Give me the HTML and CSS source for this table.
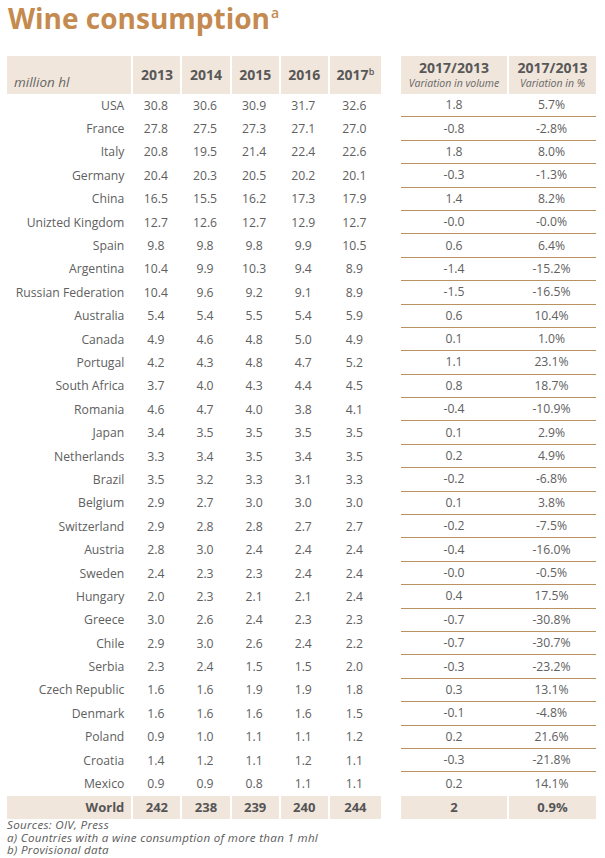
FILE: index.html
```html
<!DOCTYPE html>
<html>
<head>
<meta charset="utf-8">
<link rel="stylesheet" href="styles.css">
</head>
<body>
<h1 class="title">Wine consumption<sup class="title-sup">a</sup></h1>
<div class="tables">
  <table class="tbl left">
    <thead>
      <tr class="head">
        <th class="unit">million hl</th>
        <th>2013</th><th>2014</th><th>2015</th><th>2016</th><th class="last">2017<sup class="hsup">b</sup></th>
      </tr>
    </thead>
    <tbody id="left-body"></tbody>
    <tfoot>
      <tr class="world">
        <td class="country">World</td><td>242</td><td>238</td><td>239</td><td>240</td><td>244</td>
      </tr>
    </tfoot>
  </table>
  <table class="tbl right">
    <thead>
      <tr class="head">
        <th class="var1"><span class="vh">2017/2013</span><span class="vs">Variation in volume</span></th>
        <th class="var2"><span class="vh">2017/2013</span><span class="vs">Variation in %</span></th>
      </tr>
    </thead>
    <tbody id="right-body"></tbody>
    <tfoot>
      <tr class="world">
        <td>2</td><td>0.9%</td>
      </tr>
    </tfoot>
  </table>
</div>
<div class="notes">
  <p>Sources: OIV, Press</p>
  <p>a) Countries with a wine consumption of more than 1 mhl</p>
  <p>b) Provisional data</p>
</div>
<script>
var rows = [
["USA","30.8","30.6","30.9","31.7","32.6","1.8","5.7%"],
["France","27.8","27.5","27.3","27.1","27.0","-0.8","-2.8%"],
["Italy","20.8","19.5","21.4","22.4","22.6","1.8","8.0%"],
["Germany","20.4","20.3","20.5","20.2","20.1","-0.3","-1.3%"],
["China","16.5","15.5","16.2","17.3","17.9","1.4","8.2%"],
["Unizted Kingdom","12.7","12.6","12.7","12.9","12.7","-0.0","-0.0%"],
["Spain","9.8","9.8","9.8","9.9","10.5","0.6","6.4%"],
["Argentina","10.4","9.9","10.3","9.4","8.9","-1.4","-15.2%"],
["Russian Federation","10.4","9.6","9.2","9.1","8.9","-1.5","-16.5%"],
["Australia","5.4","5.4","5.5","5.4","5.9","0.6","10.4%"],
["Canada","4.9","4.6","4.8","5.0","4.9","0.1","1.0%"],
["Portugal","4.2","4.3","4.8","4.7","5.2","1.1","23.1%"],
["South Africa","3.7","4.0","4.3","4.4","4.5","0.8","18.7%"],
["Romania","4.6","4.7","4.0","3.8","4.1","-0.4","-10.9%"],
["Japan","3.4","3.5","3.5","3.5","3.5","0.1","2.9%"],
["Netherlands","3.3","3.4","3.5","3.4","3.5","0.2","4.9%"],
["Brazil","3.5","3.2","3.3","3.1","3.3","-0.2","-6.8%"],
["Belgium","2.9","2.7","3.0","3.0","3.0","0.1","3.8%"],
["Switzerland","2.9","2.8","2.8","2.7","2.7","-0.2","-7.5%"],
["Austria","2.8","3.0","2.4","2.4","2.4","-0.4","-16.0%"],
["Sweden","2.4","2.3","2.3","2.4","2.4","-0.0","-0.5%"],
["Hungary","2.0","2.3","2.1","2.1","2.4","0.4","17.5%"],
["Greece","3.0","2.6","2.4","2.3","2.3","-0.7","-30.8%"],
["Chile","2.9","3.0","2.6","2.4","2.2","-0.7","-30.7%"],
["Serbia","2.3","2.4","1.5","1.5","2.0","-0.3","-23.2%"],
["Czech Republic","1.6","1.6","1.9","1.9","1.8","0.3","13.1%"],
["Denmark","1.6","1.6","1.6","1.6","1.5","-0.1","-4.8%"],
["Poland","0.9","1.0","1.1","1.1","1.2","0.2","21.6%"],
["Croatia","1.4","1.2","1.1","1.2","1.1","-0.3","-21.8%"],
["Mexico","0.9","0.9","0.8","1.1","1.1","0.2","14.1%"]
];
var lb = document.getElementById("left-body");
var rb = document.getElementById("right-body");
rows.forEach(function (r) {
  var tr = document.createElement("tr");
  r.slice(0, 6).forEach(function (v, i) {
    var td = document.createElement("td");
    if (i === 0) td.className = "country";
    td.textContent = v;
    tr.appendChild(td);
  });
  lb.appendChild(tr);
  var tr2 = document.createElement("tr");
  r.slice(6).forEach(function (v) {
    var td = document.createElement("td");
    td.textContent = v;
    tr2.appendChild(td);
  });
  rb.appendChild(tr2);
});
</script>
</body>
</html>
```
FILE: styles.css
```css
html, body {
  margin: 0;
  padding: 0;
  background: #ffffff;
}
body {
  padding: 0 7px;
  font-family: "Open Sans", "Liberation Sans", sans-serif;
  color: #5a5a5a;
}
.title {
  margin: 0;
  height: 56px;
  padding: 2px 0 0 1px;
  box-sizing: border-box;
  font-size: 28px;
  line-height: 32px;
  font-weight: 700;
  color: #c48a4f;
}
.title-sup {
  font-size: 14px;
  font-weight: 600;
  vertical-align: top;
  line-height: 14px;
  position: relative;
  top: 4px;
  margin-left: 1px;
}
.tables {
  display: flex;
  align-items: flex-start;
  gap: 20px;
}
.tbl {
  border-collapse: separate;
  border-spacing: 0;
  font-size: 12.2px;
}
.left { width: 374px; }
.right { width: 195px; }
.tbl th, .tbl td {
  padding: 0;
  text-align: center;
}
.head th {
  background: #f1e6dc;
  height: 38px;
  font-size: 14px;
  font-weight: 700;
  color: #585858;
  border-left: 2px solid #ffffff;
  vertical-align: middle;
  line-height: 16px;
}
.head th:first-child { border-left: none; }
.left .head th.unit {
  width: 124px;
  text-align: left;
  vertical-align: bottom;
  padding: 0 0 4px 7px;
  font-style: italic;
  font-weight: 400;
  font-size: 13.5px;
  color: #666;
  box-sizing: border-box;
}
.left .head th { width: 47px; }
.left .head th.last { width: 51px; }
.hsup {
  font-size: 9px;
  vertical-align: top;
  line-height: 10px;
  font-weight: 600;
}
.right .head th.var1 { width: 106px; }
.right .head th { width: 87px; }
.vh {
  display: block;
  font-size: 14px;
  line-height: 16px;
}
.vs {
  display: block;
  font-size: 10.5px;
  line-height: 14px;
  font-style: italic;
  font-weight: 400;
  color: #666;
}
tbody tr { height: 23.4px; }
tbody td {
  line-height: 16px;
  color: #606060;
  box-sizing: border-box;
}
.right tbody td {
  border-bottom: 1px solid #b8925f;
}
.right tbody tr:last-child td { border-bottom: none; }
.left td.country {
  text-align: right;
  padding-right: 7px;
}
.world td {
  background: #f1e6dc;
  height: 23px;
  font-weight: 700;
  color: #555;
  border-left: 2px solid #ffffff;
  font-size: 13px;
}
.world td:first-child { border-left: none; }
.notes {
  font-size: 11.6px;
  font-style: italic;
  color: #5a5a5a;
  letter-spacing: 0.3px;
}
.notes p {
  margin: 0;
  line-height: 12.8px;
}
```
